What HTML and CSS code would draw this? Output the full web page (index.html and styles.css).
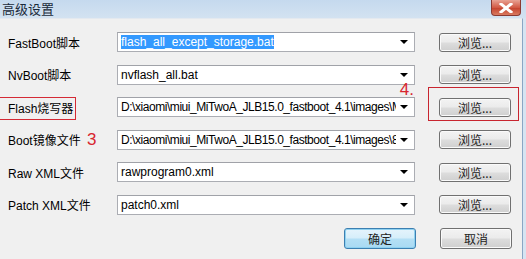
FILE: index.html
```html
<!DOCTYPE html>
<html>
<head>
<meta charset="utf-8">
<link rel="stylesheet" href="styles.css">
</head>
<body>
<div class="window">
  <div class="titlebar">
    <span class="title">高级设置</span>
    <span class="close"><svg width="14" height="10" viewBox="0 0 14 10"><path d="M2 1 L12 9 M12 1 L2 9" stroke="#fff" stroke-width="3" stroke-linecap="square"/></svg></span>
  </div>
  <div class="frame">
    <div class="content">
      <div class="row">
        <div class="label">FastBoot脚本</div>
        <div class="combo"><span class="text"><span class="sel">flash_all_except_storage.bat</span></span><span class="arrow"></span></div>
        <div class="btn">浏览...</div>
      </div>
      <div class="row">
        <div class="label">NvBoot脚本</div>
        <div class="combo"><span class="text">nvflash_all.bat</span><span class="arrow"></span></div>
        <div class="btn">浏览...</div>
      </div>
      <div class="row">
        <div class="label"><span class="redbox">Flash烧写器</span></div>
        <div class="combo"><span class="text path">D:\xiaomi\miui_MiTwoA_JLB15.0_fastboot_4.1\images\MPRG8960.hex</span><span class="arrow"></span><span class="num4">4.</span></div>
        <div class="btn marked">浏览...<span class="btnbox"></span></div>
      </div>
      <div class="row">
        <div class="label">Boot镜像文件 <span class="num3">3</span></div>
        <div class="combo"><span class="text path">D:\xiaomi\miui_MiTwoA_JLB15.0_fastboot_4.1\images\8960_msimage.mbn</span><span class="arrow"></span></div>
        <div class="btn">浏览...</div>
      </div>
      <div class="row">
        <div class="label">Raw XML文件</div>
        <div class="combo"><span class="text">rawprogram0.xml</span><span class="arrow"></span></div>
        <div class="btn">浏览...</div>
      </div>
      <div class="row">
        <div class="label">Patch XML文件</div>
        <div class="combo"><span class="text">patch0.xml</span><span class="arrow"></span></div>
        <div class="btn">浏览...</div>
      </div>
      <div class="actions">
        <div class="btn big default">确定</div>
        <div class="btn big">取消</div>
      </div>
    </div>
  </div>
</div>
</body>
</html>
```

FILE: styles.css
```css
html, body {
  margin: 0;
  padding: 0;
  background: #f0f0f0;
}
.window {
  width: 526px;
  height: 259px;
  overflow: hidden;
  font-family: "Liberation Sans", "Noto Sans CJK SC", sans-serif;
  font-size: 12px;
  color: #000;
  display: flex;
  flex-direction: column;
}
.titlebar {
  height: 18px;
  flex: none;
  background: linear-gradient(#c5d9ee, #d3e2f1);
  display: flex;
  align-items: flex-start;
  justify-content: space-between;
  padding-left: 2px;
  padding-right: 5px;
}
.title {
  font-family: "Noto Sans CJK SC", sans-serif;
  font-size: 13px;
  line-height: 17px;
  color: #1a2a3a;
}
.close {
  width: 30px;
  height: 16px;
  border: 1px solid #8a3a33;
  border-top: none;
  border-radius: 0 0 4px 4px;
  background: linear-gradient(#e8a294, #d25a45 50%, #c4402c 51%, #d97a60);
  display: flex;
  align-items: center;
  justify-content: center;
  box-sizing: border-box;
}
.frame {
  flex: 1;
  display: flex;
  background: #d6e4f2;
  padding-right: 3px;
}
.content {
  flex: 1;
  background: #f0f0f0;
  border-right: 1px solid #8aa6c4;
  border-top: 1px solid #e4e9ef;
  padding: 13px 0 0 8px;
  display: flex;
  flex-direction: column;
  gap: 12.5px;
}
.row {
  display: flex;
  align-items: center;
  height: 20px;
}
.label {
  width: 109px;
  flex: none;
  position: relative;
  white-space: nowrap;
}
.redbox {
  position: relative;
}
.redbox::before {
  content: "";
  position: absolute;
  left: -9px;
  right: -3px;
  top: -5px;
  bottom: -4px;
  border: 1px solid #d42a35;
}
.num3 {
  color: #d8262f;
  font-size: 17px;
  line-height: 12px;
  margin-left: 3px;
}
.combo {
  width: 298px;
  height: 20px;
  box-sizing: border-box;
  border: 1px solid #abadb3;
  border-top-color: #a0a2a8;
  background: #fff;
  display: flex;
  align-items: center;
  position: relative;
  flex: none;
}
.combo .text {
  flex: 1;
  overflow: hidden;
  white-space: nowrap;
  padding-left: 3px;
  margin-right: 4px;
}
.combo .path {
  letter-spacing: -0.45px;
}
.sel {
  background: #3399ff;
  color: #fff;
  padding: 1px 0;
}
.arrow {
  width: 0;
  height: 0;
  border-left: 4px solid transparent;
  border-right: 4px solid transparent;
  border-top: 4px solid #000;
  margin-right: 6px;
  flex: none;
}
.num4 {
  position: absolute;
  right: 0;
  top: -16px;
  color: #d8262f;
  font-size: 17px;
  line-height: 16px;
}
.btn {
  width: 72px;
  height: 19px;
  box-sizing: border-box;
  margin-left: 24px;
  border: 1px solid #707070;
  border-radius: 3px;
  background: linear-gradient(#f3f3f3, #ebebeb 48%, #dddddd 52%, #cfcfcf);
  box-shadow: inset 0 0 0 1px #fafafa;
  display: flex;
  align-items: center;
  justify-content: center;
  font-family: "Noto Sans CJK SC", sans-serif;
  font-size: 12px;
  color: #222;
  flex: none;
  position: relative;
}
.btnbox {
  position: absolute;
  left: -12px;
  right: -9px;
  top: -12px;
  bottom: -5px;
  border: 1px solid #c8252f;
}
.actions {
  display: flex;
  justify-content: flex-end;
  padding-right: 10px;
  margin-top: 0.5px;
}
.btn.big {
  height: 21px;
}
.btn.default {
  border-color: #3c7fb1;
  background: linear-gradient(#e5f4fc, #d6eefa 48%, #b4dff5 52%, #a9daf3);
  box-shadow: inset 0 0 0 1px #8fd1f0;
}
```
